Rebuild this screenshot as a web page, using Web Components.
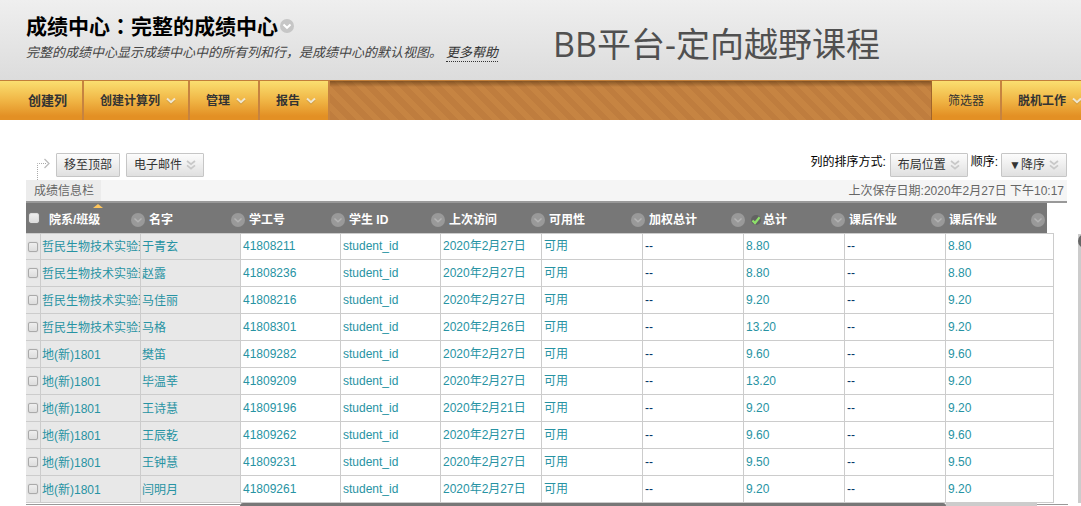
<!DOCTYPE html>
<html lang="zh-CN">
<head>
<meta charset="utf-8">
<title>成绩中心：完整的成绩中心</title>
<style>
body { margin: 0; background: #fff; font: 12px/16px "Liberation Sans", "Noto Sans CJK SC", sans-serif; color: #000; }
.colon { font-family: "Noto Sans CJK TC", sans-serif; }
</style>
</head>
<body>
<bb-page-header>
  <span slot="title">成绩中心<span class="colon" lang="zh-TW">：</span>完整的成绩中心</span>
  <span slot="text">完整的成绩中心显示成绩中心中的所有列和行，是成绩中心的默认视图。</span>
  <span slot="banner">BB平台-定向越野课程</span>
</bb-page-header>
<bb-action-bar>
  <bb-action primary>创建列</bb-action>
  <bb-action menu>创建计算列</bb-action>
  <bb-action menu>管理</bb-action>
  <bb-action menu>报告</bb-action>
  <bb-action slot="end" plain>筛选器</bb-action>
  <bb-action slot="end" menu>脱机工作</bb-action>
</bb-action-bar>
<bb-toolbar></bb-toolbar>
<bb-grade-grid></bb-grade-grid>

<script>
const define = (name, html, setup) => customElements.define(name, class extends HTMLElement {
  constructor() {
    super();
    const t = document.createElement('template');
    t.innerHTML = html;
    this.attachShadow({ mode: 'open' }).append(t.content.cloneNode(true));
  }
  connectedCallback() { if (setup) setup(this, this.shadowRoot); }
});

const icons = {
  circle: '<svg width="14" height="14" viewBox="0 0 14 14"><circle cx="7" cy="7" r="7" fill="var(--disc, #999)"/><path d="M3.500 5.500 7 8.800l3.500-3.300" fill="none" stroke="var(--mark, #b4b4b4)" stroke-width="var(--w, 1.4)"/></svg>',
  down: '<svg width="10" height="8" viewBox="0 0 10 8"><path d="M1 2.8 5 6.6l4-3.8" fill="none" stroke="#b98a3c" stroke-width="1.6" opacity=".55"/><path d="M1 1.6 5 5.2l4-3.6" fill="none" stroke="#eee6d0" stroke-width="2"/></svg>',
  double: '<svg width="10" height="10" viewBox="0 0 10 10"><path d="M1 1l4 3.200L9 1M1 5.400l4 3.200 4-3.200" fill="none" stroke="#c8c8c8" stroke-width="1.800"/></svg>',
  check: '<svg width="12" height="12" viewBox="0 0 12 12"><circle cx="6" cy="6" r="5" fill="#555" opacity=".6"/><path d="M2.500 6.400 5 9l4.600-5.800" fill="none" stroke="#8ee06a" stroke-width="2.200"/></svg>',
  arrow: '<svg width="15" height="22" viewBox="0 0 15 22"><path d="M1.500 22V5.500H11" fill="none" stroke="#aaa" stroke-dasharray="1 1"/><path d="M8.500 1l4.500 4.500L8.500 10" fill="none" stroke="#bbb" stroke-width="1.300"/></svg>'
};
define('bb-icon', '<style>:host{display:inline-flex;flex:none}svg{display:block}</style><span></span>',
  (el, root) => { root.querySelector('span').innerHTML = icons[el.getAttribute('name')]; });

define('bb-page-header', `
<style>
:host { display: flex; align-items: flex-start; gap: 55px; height: 80px; padding-left: 26px; box-sizing: border-box; overflow: hidden; white-space: nowrap; background: linear-gradient(#efefef, #dcdcdc); }
h1 { display: flex; align-items: center; gap: 2px; height: 28px; margin: 12px 0 0; font-size: 21px; line-height: 28px; font-weight: bold; }
p { margin: 5px 0 0; font-size: 13px; line-height: 16px; font-style: italic; color: #444; }
a { display: inline-block; margin-left: 4px; color: #333; text-decoration: none; border-bottom: 1px dotted #333; }
bb-icon { --disc: #c6c6c6; --mark: #fff; --w: 2; }
.banner { margin-top: 20px; font: 34px/48px "Open Sans", "Noto Sans CJK SC", sans-serif; color: #505050; }
</style>
<div><h1><slot name="title"></slot><bb-icon name="circle"></bb-icon></h1>
<p><slot name="text"></slot><a href="#help">更多帮助</a></p></div>
<div class="banner"><slot name="banner"></slot></div>`);

define('bb-action-bar', `
<style>
:host { display: block; }
nav { display: flex; height: 40px; box-sizing: border-box; overflow: hidden; border-top: 1px solid #c17f3a;
  background: linear-gradient(rgba(70,40,10,.5), transparent 6px), repeating-linear-gradient(45deg, #c68442 0 6px, #bf7d3e 6px 12px); }
.start, .end { display: flex; }
.end { margin-left: auto; margin-right: -15px; border-left: 1px solid #a0642c; }
</style>
<nav><div class="start"><slot></slot></div><div class="end"><slot name="end"></slot></div></nav>`);

define('bb-action', `
<style>
:host { display: block; }
button { display: flex; align-items: center; gap: 6px; height: 39px; padding: 0 12px 0 16px; border: 0; border-right: 2px solid #c68340;
  background: linear-gradient(#fadf70, #f0b545 50%, #e39024 90%); font: bold 12px/16px "Liberation Sans", "Noto Sans CJK SC", sans-serif; color: #333; white-space: nowrap; }
:host([primary]) button { padding: 0 15px 0 28px; font-size: 13px; }
:host([plain]) button { padding: 0 16px; font-weight: normal; }
bb-icon { display: none; }
:host([menu]) bb-icon { display: inline-flex; }
</style>
<button type="button"><slot></slot><bb-icon name="down"></bb-icon></button>`);

define('bb-toolbar', `
<style>
:host { display: block; padding: 33px 14px 0 26px; }
.row { display: flex; align-items: flex-start; height: 27px; }
.left { display: flex; gap: 6px; }
.path { margin: 5px 0 0 10px; width: 14px; }
.right { display: flex; gap: 3px; margin-left: auto; align-items: flex-start; }
button { display: flex; align-items: center; gap: 4px; height: 24px; padding: 0 7px; border: 1px solid #c6c6c6; border-radius: 1px;
  background: linear-gradient(#fcfcfc, #e0e0e0); font: 12px/16px "Liberation Sans", "Noto Sans CJK SC", sans-serif; color: #333; white-space: nowrap; }
label { line-height: 18px; }
.right label:first-child { padding-right: 1px; }
.info { display: flex; justify-content: space-between; height: 23px; box-sizing: border-box; background: #f5f5f5; border-bottom: 2px solid #999; color: #666; line-height: 23px; }
.tab { padding: 0 7px 0 8px; background: #ececec; height: 21px; }
.saved { padding-right: 3px; }
</style>
<div class="row">
  <div class="left"><bb-icon class="path" name="arrow"></bb-icon><button type="button">移至顶部</button><button type="button">电子邮件<bb-icon name="double"></bb-icon></button></div>
  <div class="right"><label for="sort">列的排序方式:</label><button id="sort" type="button">布局位置<bb-icon name="double"></bb-icon></button><label for="order">顺序:</label><button id="order" type="button">▼降序<bb-icon name="double"></bb-icon></button></div>
</div>
<div class="info"><span class="tab">成绩信息栏</span><span class="saved">上次保存日期:2020年2月27日 下午10:17</span></div>`);

const lab = '哲民生物技术实验班', geo = '地(新)1801';
const rows = [
  [lab, '于青玄', '41808211', '27', '8.80', '8.80'],
  [lab, '赵露', '41808236', '27', '8.80', '8.80'],
  [lab, '马佳丽', '41808216', '27', '9.20', '9.20'],
  [lab, '马格', '41808301', '26', '13.20', '9.20'],
  [geo, '樊笛', '41809282', '27', '9.60', '9.60'],
  [geo, '毕温莘', '41809209', '27', '13.20', '9.20'],
  [geo, '王诗慧', '41809196', '21', '9.20', '9.20'],
  [geo, '王辰乾', '41809262', '27', '9.60', '9.60'],
  [geo, '王钟慧', '41809231', '27', '9.50', '9.50'],
  [geo, '闫明月', '41809261', '27', '9.20', '9.20']
];
const heads = ['院系/班级', '名字', '学工号', '学生 ID', '上次访问', '可用性', '加权总计', '总计', '课后作业', '课后作业'];

define('bb-grade-grid', `
<style>
:host { display: flex; gap: 10px; padding-left: 26px; overflow: hidden; }
.main { flex: 1; min-width: 0; }
table, thead, tbody { display: block; }
tr { display: grid; }
thead tr { grid-template-columns: 21px repeat(10, 1fr); height: 30px; margin-right: 21px; background: #777; color: #fff; }
tbody { border-top: 1px solid #ccc; margin-right: 14px; }
tbody tr { grid-template-columns: 15px repeat(4, 100fr) repeat(5, 101fr) 108fr; height: 27px; }
tbody tr:first-child { height: 26px; }
th, td { padding: 0; min-width: 0; text-align: left; box-sizing: border-box; white-space: nowrap; overflow: hidden; }
th { position: relative; display: flex; align-items: center; gap: 1px; padding: 4px 2px 0; line-height: 26px; font-weight: bold; }
th bb-icon[name=circle] { margin-left: auto; }
th bb-icon[name=check] { margin-left: 1px; }
th.sorted::before { content: ""; position: absolute; left: 46px; top: 1px; border: 5px solid transparent; border-top: 0; border-bottom: 4px solid #ffc65c; }
td { padding-left: 2px; border: solid #ccc; border-width: 0 1px 1px 0; line-height: 27px; color: #2793a3; }
td:nth-child(-n+3) { background: #e8e8e8; padding-left: 1px; line-height: 28px; }
tr:first-child td { line-height: 25px; }
tr:first-child td:nth-child(-n+3) { line-height: 26px; }
td.none { color: #036; }
.pick, td.pick { padding: 0 0 0 2px; display: flex; align-items: center; }
input { appearance: none; box-sizing: border-box; width: 10px; height: 10px; margin: 0; border: 1px solid #aaa; border-radius: 2px; background: linear-gradient(#eee, #ddd); box-shadow: 0 0 1px #aaa; }
.pick.all { padding: 0 0 1px 3px; }
.pick.all input { border-color: #ddd; }
.hbar { display: grid; grid-template-columns: 214fr 706fr 91fr 31fr; height: 3px; }
.hbar i:nth-child(odd) { background: #ccc; }
.hbar i:first-child, .hbar i:last-child { height: 1px; margin-top: 1px; background: #999; }
.hbar i:nth-child(2) { background: #777; border-radius: 3px 3px 0 0; }
.vbar { width: 3px; margin: 31px 0 3px; background: #ccc; overflow: hidden; }
.vbar::before { content: ""; display: block; width: 14px; height: 14px; border-radius: 7px; background: #666; }
</style>
<div class="main">
  <table><thead><tr></tr></thead><tbody></tbody></table>
  <div class="hbar"><i></i><i></i><i></i><i></i></div>
</div>
<div class="vbar"></div>`, (el, root) => {
  root.querySelector('thead tr').innerHTML =
    '<th class="pick all"><input type="checkbox" aria-label="全选"></th>' +
    heads.map((h, i) => `<th class="${i ? '' : 'sorted'}">${h === '总计' ? '<bb-icon name="check"></bb-icon>' : ''}${h}<bb-icon name="circle"></bb-icon></th>`).join('');
  root.querySelector('tbody').innerHTML = rows.map(([dept, name, id, day, total, work]) =>
    `<tr><td class="pick"><input type="checkbox" aria-label="${name}"></td>` +
    [dept, name, id, 'student_id', `2020年2月${day}日`, '可用', '--', total, '--', work]
      .map(v => `<td${v === '--' ? ' class="none"' : ''}>${v}</td>`).join('') + '</tr>').join('');
});
</script>
</body>
</html>
